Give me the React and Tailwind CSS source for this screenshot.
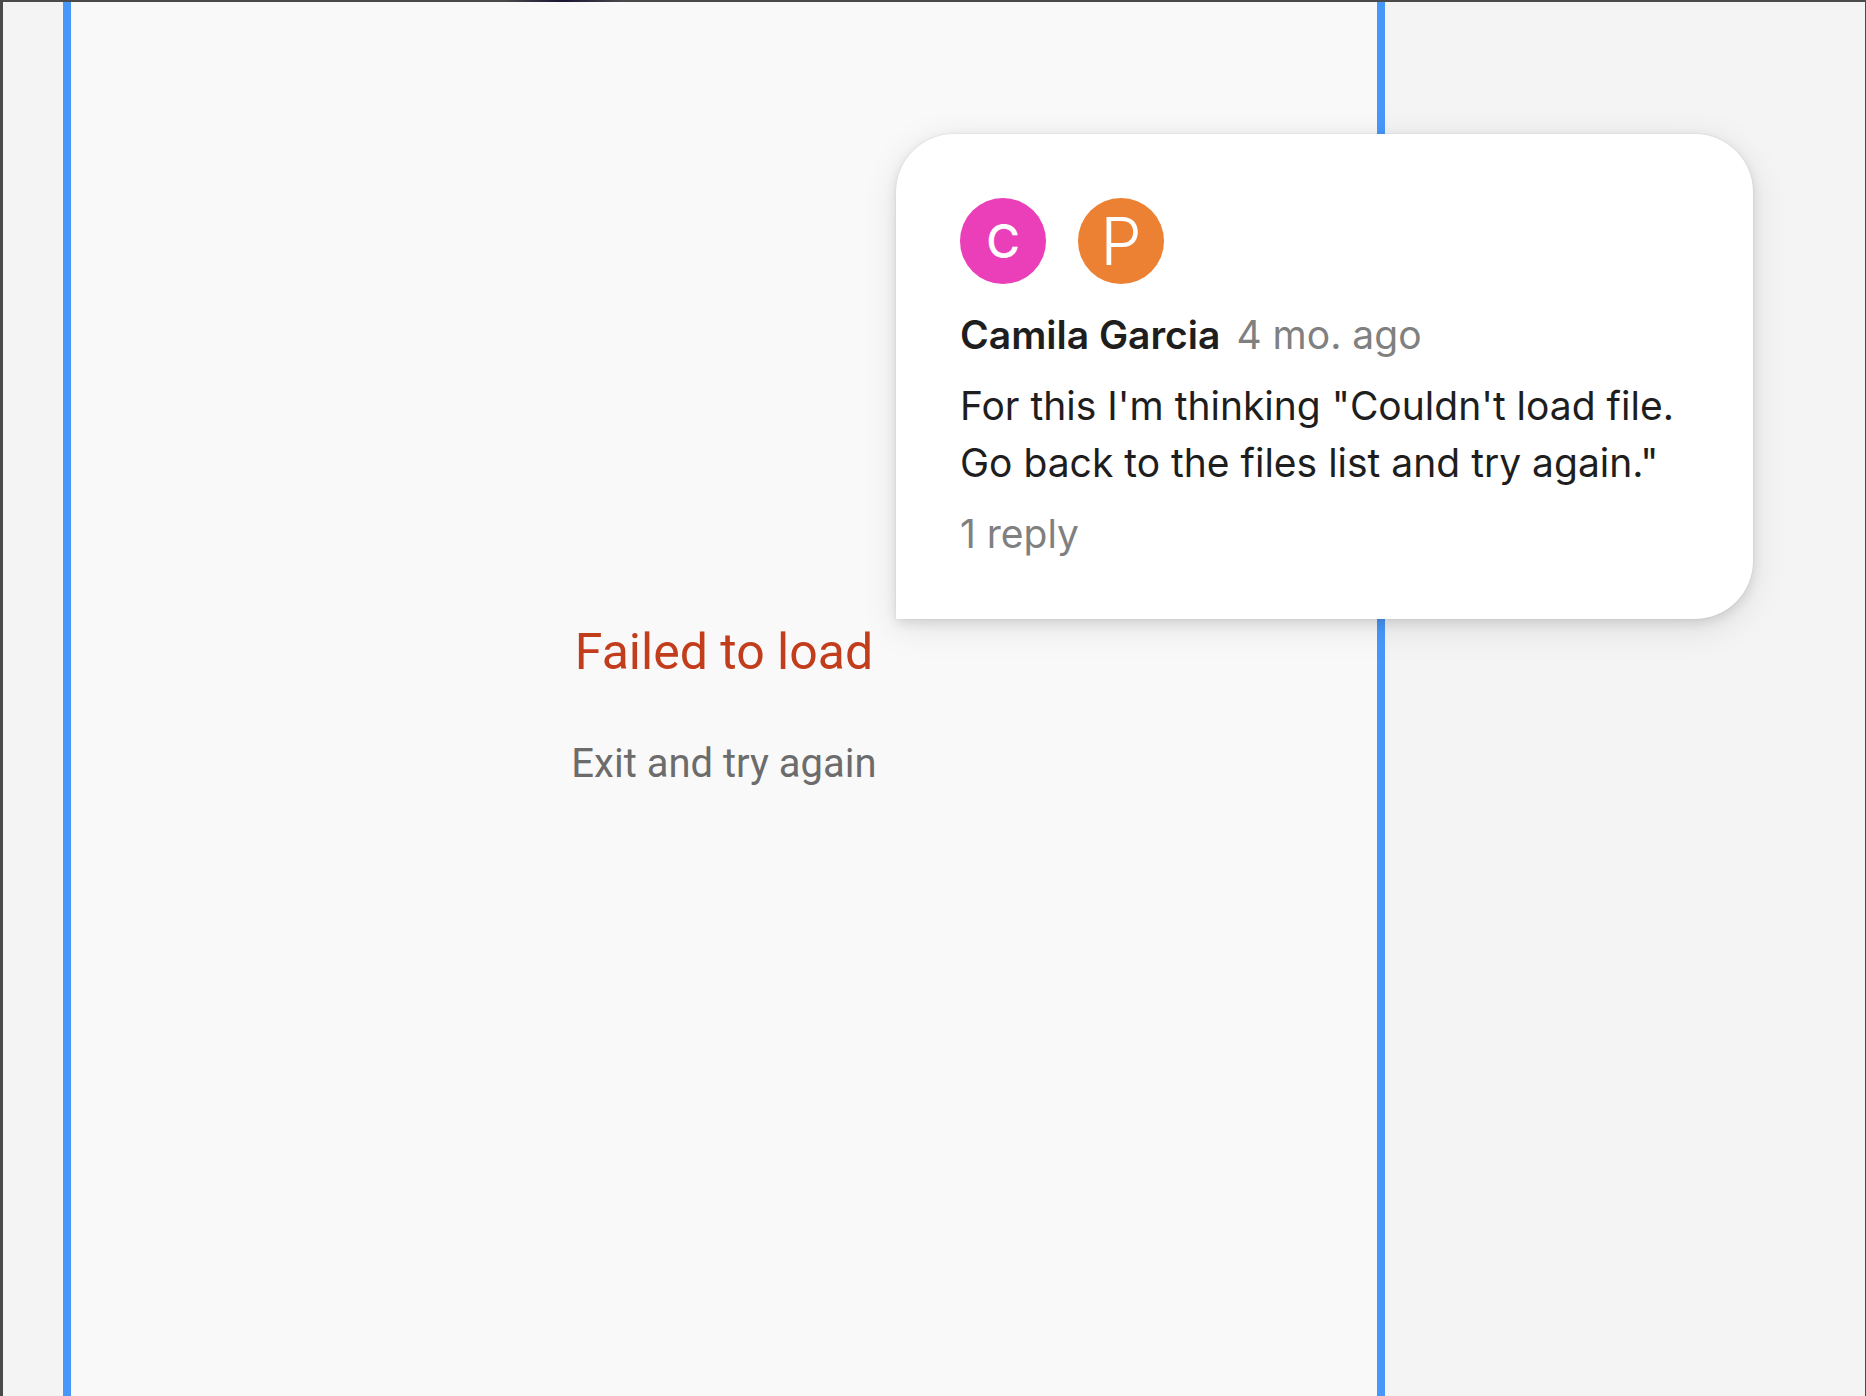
const participants = [
  { id: 'camila', letter: 'C', style: 'bg-[#ea3fb8] text-[46px] font-medium' },
  { id: 'p', letter: 'P', style: 'bg-[#ec8133] text-[66px] font-light' },
];

function CommentCard() {
  return (
    <article className="absolute right-28 top-[132px] w-[857px] rounded-[58px] rounded-bl-none bg-white px-16 pt-16 pb-[57px] font-['Inter',sans-serif] text-[39px] leading-[57px] text-[#1e1e1e] shadow-[0_0_2px_rgba(0,0,0,0.1),0_4px_12px_rgba(0,0,0,0.1),0_8px_36px_rgba(0,0,0,0.1)]">
      <div className="mb-[22px] flex gap-8">
        {participants.map((p) => (
          <span
            key={p.id}
            className={`flex size-[86px] items-center justify-center rounded-full leading-none text-white ${p.style}`}
          >
            {p.letter}
          </span>
        ))}
      </div>
      <header className="flex gap-4">
        <h2 className="font-semibold">Camila Garcia</h2>
        <time className="text-[#808080]">4 mo. ago</time>
      </header>
      <p className="mt-3.5 whitespace-nowrap">
        For this I'm thinking "Couldn't load file.
        <br />
        Go back to the files list and try again."
      </p>
      <p className="mt-3.5 text-[#808080]">1 reply</p>
    </article>
  );
}

export default function App() {
  return (
    <main className="relative flex min-h-screen border-t-2 border-r border-l-3 border-[#4a4a4a] bg-[#f4f4f4]">
      <div className="absolute -top-0.5 left-[500px] h-0.5 w-[120px] bg-linear-to-r from-[#4a4a4a] via-[#1c1533] to-[#4a4a4a]" />
      <div className="w-15 shrink-0" />
      <section className="flex w-[71%] flex-col items-center gap-12 border-x-8 border-[#4898fb] bg-[#f9f9f9] pt-[618px] font-['Roboto',sans-serif]">
        <h1 className="text-[50px] leading-[64px] text-[#c23d1c]">Failed to load</h1>
        <p className="text-[40px] leading-[64px] text-[#6c6c6c]">Exit and try again</p>
      </section>
      <CommentCard />
    </main>
  );
}
